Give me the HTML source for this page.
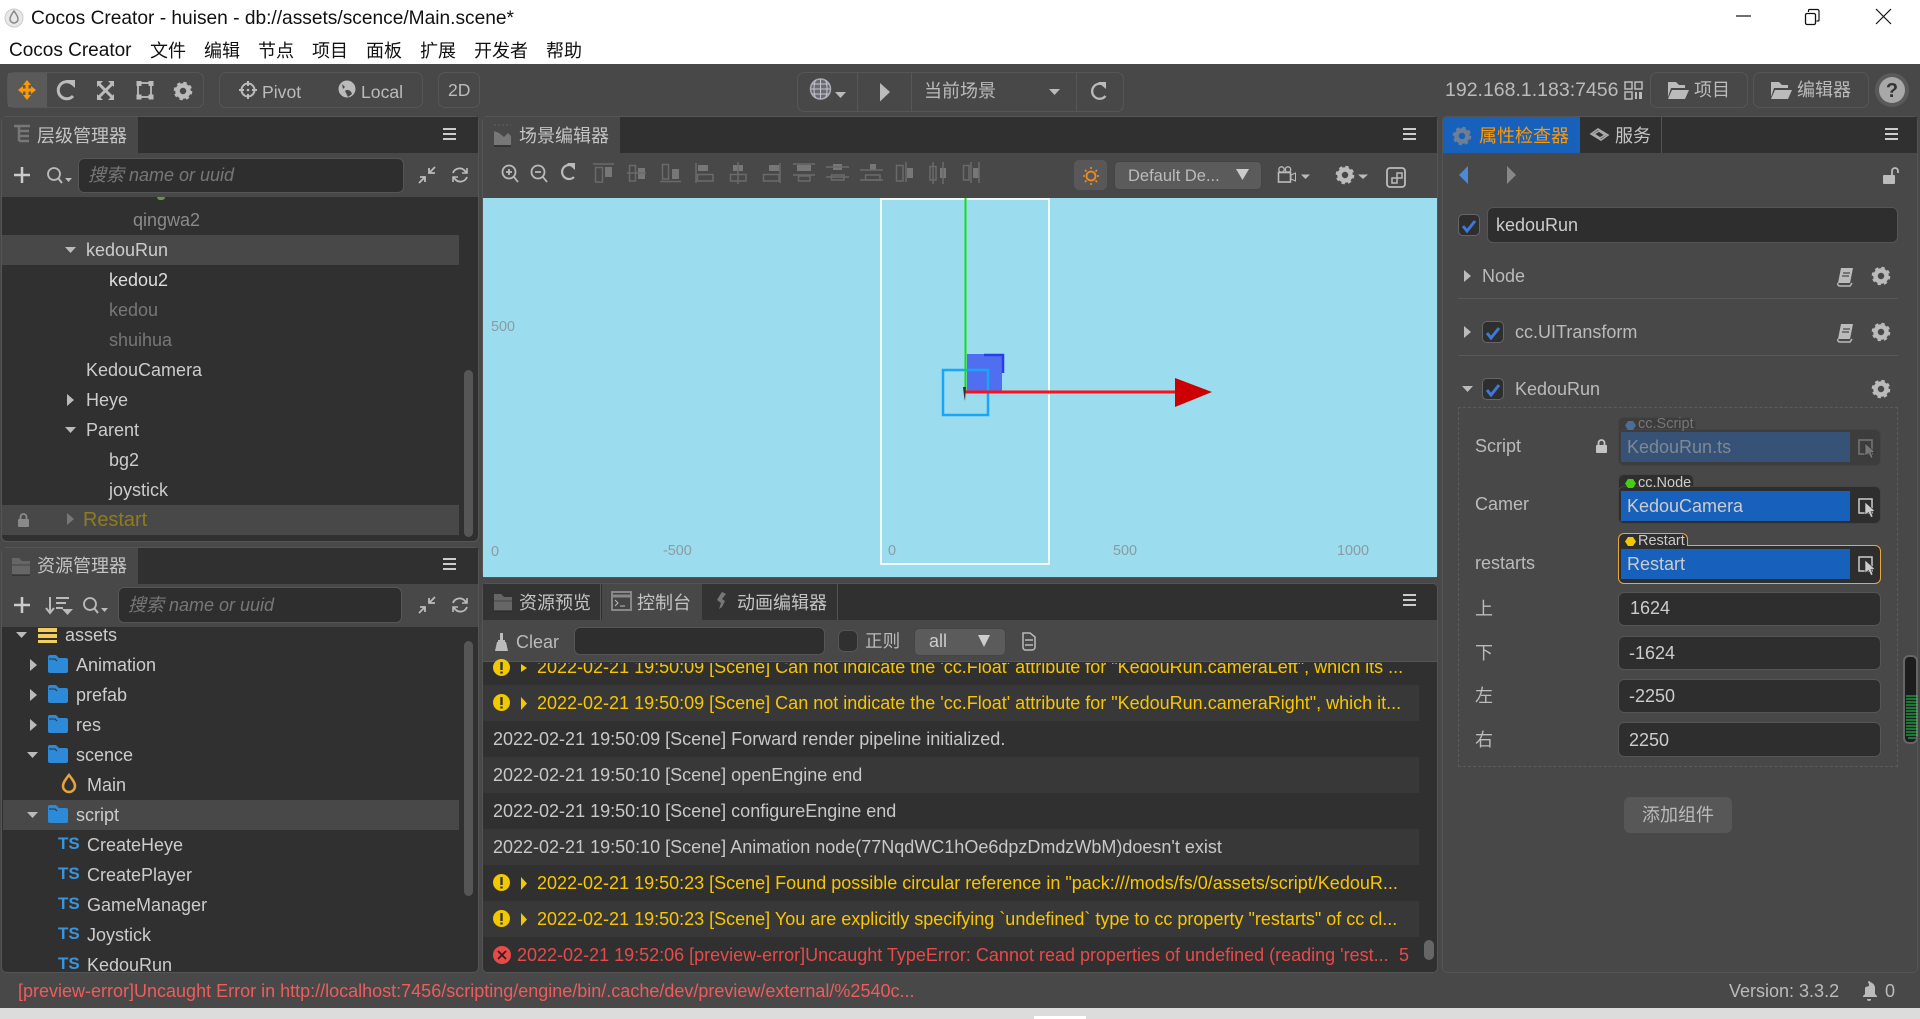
<!DOCTYPE html>
<html><head><meta charset="utf-8"><style>
*{box-sizing:border-box}
html,body{margin:0;padding:0;width:1920px;height:1019px;overflow:hidden;background:#484848}
body{position:relative;font-family:"Liberation Sans","Noto Sans CJK SC",sans-serif;font-size:18px;color:#bbb}
.r{position:absolute}
.t{position:absolute;white-space:nowrap;transform:translateY(-50%);line-height:24px}
.inp{position:absolute;background:#2e2e2e;border:1px solid #555;border-radius:6px}
.ph{font-style:italic;color:#777}
.w{color:#f7c600}
.g{border:1px solid #565656;border-radius:7px;position:absolute}
.b{background:#1760bc;color:#ccc}
svg{position:absolute;left:0;top:0}
</style></head><body>
<div class="r" style="left:0;top:0;width:1920px;height:64px;background:#fff"></div>
<div class="r" style="left:0;top:1008px;width:1920px;height:11px;background:#dcdcdc"></div>
<div class="r" style="left:1034px;top:1016px;width:52px;height:3px;background:#fff"></div>
<div class="t" style="left:31px;top:19px;color:#111;font-size:19.15px">Cocos Creator - huisen - db://assets/scence/Main.scene*</div>
<div class="t" style="left:9px;top:51px;color:#111;font-size:19px">Cocos Creator</div>
<div class="t" style="left:150px;top:51px;color:#111;font-size:18px">文件</div>
<div class="t" style="left:204px;top:51px;color:#111;font-size:18px">编辑</div>
<div class="t" style="left:258px;top:51px;color:#111;font-size:18px">节点</div>
<div class="t" style="left:312px;top:51px;color:#111;font-size:18px">项目</div>
<div class="t" style="left:366px;top:51px;color:#111;font-size:18px">面板</div>
<div class="t" style="left:420px;top:51px;color:#111;font-size:18px">扩展</div>
<div class="t" style="left:474px;top:51px;color:#111;font-size:18px">开发者</div>
<div class="t" style="left:546px;top:51px;color:#111;font-size:18px">帮助</div>

<div class="g" style="left:7px;top:72px;width:197px;height:36px"></div>
<div class="r" style="left:8px;top:73px;width:39px;height:34px;background:#5a5a5a"></div>
<div class="g" style="left:219px;top:72px;width:204px;height:36px"></div>
<div class="g" style="left:438px;top:72px;width:42px;height:36px"></div>
<div class="t" style="left:262px;top:92px;color:#bbb;font-size:17.6px">Pivot</div>
<div class="t" style="left:361px;top:92px;color:#bbb;font-size:17.6px">Local</div>
<div class="t" style="left:448px;top:90px;color:#bbb;font-size:17.6px">2D</div>
<div class="g" style="left:797px;top:72px;width:327px;height:40px"></div>
<div class="r" style="left:857px;top:73px;width:1px;height:38px;background:#565656"></div>
<div class="r" style="left:911px;top:73px;width:1px;height:38px;background:#565656"></div>
<div class="r" style="left:1076px;top:73px;width:1px;height:38px;background:#565656"></div>
<div class="t" style="left:924px;top:91px;color:#bbb;font-size:18px">当前场景</div>
<div class="t" style="left:1445px;top:90px;color:#bbb;font-size:19.5px">192.168.1.183:7456</div>
<div class="g" style="left:1650px;top:72px;width:98px;height:36px"></div>
<div class="g" style="left:1753px;top:72px;width:116px;height:36px"></div>
<div class="t" style="left:1694px;top:90px;font-size:18px">项目</div>
<div class="t" style="left:1797px;top:90px;font-size:18px">编辑器</div>

<!-- hierarchy -->
<div class="r" style="left:1px;top:116px;width:478px;height:426px;background:#484848;border:1px solid #555;border-radius:5px"></div>
<div class="r" style="left:2px;top:117px;width:476px;height:36px;background:#303030"></div>
<div class="r" style="left:2px;top:117px;width:136px;height:36px;background:#484848"></div>
<div class="t" style="left:37px;top:136px;font-size:18px;color:#c4c4c4">层级管理器</div>
<div class="inp" style="left:78px;top:158px;width:326px;height:35px"></div>
<div class="t ph" style="left:88px;top:175px">搜索 name or uuid</div>
<div class="r" style="left:2px;top:197px;width:476px;height:344px;background:#303030;border-radius:0 0 5px 5px;overflow:hidden"></div>
<div class="r" style="left:2px;top:235px;width:457px;height:30px;background:#484848"></div>
<div class="r" style="left:2px;top:505px;width:457px;height:30px;background:#484848"></div>
<div class="r" style="left:157px;top:197px;width:8px;height:3px;background:#5c9a46;border-radius:0 0 4px 4px"></div>
<div class="r" style="left:464px;top:370px;width:9px;height:167px;background:#565656;border-radius:5px"></div>
<div class="t" style="left:133px;top:220px;color:#8a8a8a">qingwa2</div>
<div class="t" style="left:86px;top:250px;color:#ccc">kedouRun</div>
<div class="t" style="left:109px;top:280px;color:#ddd">kedou2</div>
<div class="t" style="left:109px;top:310px;color:#777">kedou</div>
<div class="t" style="left:109px;top:340px;color:#777">shuihua</div>
<div class="t" style="left:86px;top:370px;color:#ccc">KedouCamera</div>
<div class="t" style="left:86px;top:400px;color:#ccc">Heye</div>
<div class="t" style="left:86px;top:430px;color:#ccc">Parent</div>
<div class="t" style="left:109px;top:460px;color:#ccc">bg2</div>
<div class="t" style="left:109px;top:490px;color:#ccc">joystick</div>
<div class="t" style="left:83px;top:520px;color:#8f7c1f;font-size:19.9px">Restart</div>

<!-- assets -->
<div class="r" style="left:1px;top:547px;width:478px;height:426px;background:#484848;border:1px solid #555;border-radius:5px"></div>
<div class="r" style="left:2px;top:548px;width:476px;height:36px;background:#303030"></div>
<div class="r" style="left:2px;top:548px;width:136px;height:37px;background:#484848"></div>
<div class="t" style="left:37px;top:566px;font-size:18px;color:#c4c4c4">资源管理器</div>
<div class="inp" style="left:118px;top:587px;width:284px;height:36px"></div>
<div class="t ph" style="left:128px;top:605px">搜索 name or uuid</div>
<div class="r" style="left:2px;top:627px;width:476px;height:345px;background:#303030;overflow:hidden;border-radius:0 0 5px 5px"></div>
<div class="r" style="left:3px;top:800px;width:456px;height:30px;background:#484848"></div>
<div class="r" style="left:464px;top:641px;width:9px;height:255px;background:#565656;border-radius:5px"></div>
<div class="t" style="left:65px;top:635px;color:#ccc">assets</div>
<div class="t" style="left:76px;top:665px;color:#ccc">Animation</div>
<div class="t" style="left:76px;top:695px;color:#ccc">prefab</div>
<div class="t" style="left:76px;top:725px;color:#ccc">res</div>
<div class="t" style="left:76px;top:755px;color:#ccc">scence</div>
<div class="t" style="left:87px;top:785px;color:#ccc">Main</div>
<div class="t" style="left:76px;top:815px;color:#ccc">script</div>
<div class="t" style="left:87px;top:845px;color:#ccc">CreateHeye</div>
<div class="t" style="left:87px;top:875px;color:#ccc">CreatePlayer</div>
<div class="t" style="left:87px;top:905px;color:#ccc">GameManager</div>
<div class="t" style="left:87px;top:935px;color:#ccc">Joystick</div>
<div class="t" style="left:87px;top:965px;color:#ccc;height:14px;overflow:hidden;line-height:14px">KedouRun</div>
<div class="t" style="left:58px;top:844px;color:#3a96dc;font-weight:bold;font-size:17px">TS</div>
<div class="t" style="left:58px;top:874px;color:#3a96dc;font-weight:bold;font-size:17px">TS</div>
<div class="t" style="left:58px;top:904px;color:#3a96dc;font-weight:bold;font-size:17px">TS</div>
<div class="t" style="left:58px;top:934px;color:#3a96dc;font-weight:bold;font-size:17px">TS</div>
<div class="t" style="left:58px;top:964px;color:#3a96dc;font-weight:bold;font-size:17px">TS</div>

<!-- scene -->
<div class="r" style="left:482px;top:116px;width:956px;height:462px;border:1px solid #555;border-radius:5px"></div>
<div class="r" style="left:483px;top:117px;width:954px;height:36px;background:#303030"></div>
<div class="r" style="left:483px;top:117px;width:137px;height:36px;background:#484848"></div>
<div class="t" style="left:519px;top:136px;font-size:18px;color:#c4c4c4">场景编辑器</div>
<div class="r" style="left:1074px;top:160px;width:33px;height:30px;background:#585858;border-radius:5px"></div>
<div class="r" style="left:1114px;top:161px;width:148px;height:29px;background:#5b5b5b;border:1px solid #444;border-radius:5px"></div>
<div class="t" style="left:1128px;top:176px;color:#bbb;font-size:16.5px">Default De...</div>
<div class="r" style="left:483px;top:198px;width:954px;height:379px;background:#9bdcee;overflow:hidden"></div>
<div class="r" style="left:880px;top:198px;width:170px;height:367px;border:2px solid #eef9fc"></div>
<div class="t" style="left:491px;top:327px;color:#8c9ba1;font-size:14.4px">500</div>
<div class="t" style="left:491px;top:552px;color:#8c9ba1;font-size:14.4px">0</div>
<div class="t" style="left:663px;top:551px;color:#8c9ba1;font-size:14.4px">-500</div>
<div class="t" style="left:888px;top:551px;color:#8c9ba1;font-size:14.4px">0</div>
<div class="t" style="left:1113px;top:551px;color:#8c9ba1;font-size:14.4px">500</div>
<div class="t" style="left:1337px;top:551px;color:#8c9ba1;font-size:14.4px">1000</div>

<!-- console -->
<div class="r" style="left:482px;top:583px;width:956px;height:390px;background:#303030;border:1px solid #555;border-radius:5px"></div>
<div class="r" style="left:483px;top:620px;width:954px;height:42px;background:#484848;border-bottom:1px solid #555"></div>
<div class="r" style="left:483px;top:584px;width:118px;height:36px;background:#333;border-right:1px solid #555"></div>
<div class="r" style="left:602px;top:584px;width:100px;height:37px;background:#484848"></div>
<div class="r" style="left:702px;top:584px;width:136px;height:36px;background:#333;border-right:1px solid #555"></div>
<div class="t" style="left:519px;top:603px;font-size:18px;color:#c4c4c4">资源预览</div>
<div class="t" style="left:637px;top:603px;font-size:18px;color:#c4c4c4">控制台</div>
<div class="t" style="left:737px;top:603px;font-size:18px;color:#c4c4c4">动画编辑器</div>
<div class="t" style="left:516px;top:642px;color:#bbb">Clear</div>
<div class="inp" style="left:574px;top:627px;width:251px;height:28px"></div>
<div class="r" style="left:838px;top:630px;width:20px;height:22px;background:#303030;border:1px solid #555;border-radius:6px"></div>
<div class="t" style="left:865px;top:641px;font-size:17.6px;color:#bbb">正则</div>
<div class="r" style="left:914px;top:628px;width:92px;height:28px;background:#5b5b5b;border:1px solid #444;border-radius:5px"></div>
<div class="t" style="left:929px;top:641px;color:#ccc">all</div>
<div class="r" style="left:483px;top:663px;width:936px;height:22px;background:#303030;overflow:hidden"></div>
<div class="r" style="left:483px;top:685px;width:936px;height:36px;background:#383838"></div>
<div class="r" style="left:483px;top:757px;width:936px;height:36px;background:#383838"></div>
<div class="r" style="left:483px;top:829px;width:936px;height:36px;background:#383838"></div>
<div class="r" style="left:483px;top:901px;width:936px;height:36px;background:#383838"></div>
<div class="r" style="left:1424px;top:940px;width:10px;height:20px;background:#666;border-radius:5px"></div>
<div class="r" style="left:483px;top:663px;width:936px;height:18px;overflow:hidden"><div class="t w" style="left:54px;top:4px;">2022-02-21 19:50:09 [Scene] Can not indicate the 'cc.Float' attribute for "KedouRun.cameraLeft", which its ...</div></div>
<div class="t w" style="left:537px;top:703px">2022-02-21 19:50:09 [Scene] Can not indicate the 'cc.Float' attribute for "KedouRun.cameraRight", which it...</div>
<div class="t" style="left:493px;top:739px;color:#c8c8c8">2022-02-21 19:50:09 [Scene] Forward render pipeline initialized.</div>
<div class="t" style="left:493px;top:775px;color:#c8c8c8">2022-02-21 19:50:10 [Scene] openEngine end</div>
<div class="t" style="left:493px;top:811px;color:#c8c8c8">2022-02-21 19:50:10 [Scene] configureEngine end</div>
<div class="t" style="left:493px;top:847px;color:#c8c8c8">2022-02-21 19:50:10 [Scene] Animation node(77NqdWC1hOe6dpzDmdzWbM)doesn't exist</div>
<div class="t w" style="left:537px;top:883px">2022-02-21 19:50:23 [Scene] Found possible circular reference in "pack:///mods/fs/0/assets/script/KedouR...</div>
<div class="t w" style="left:537px;top:919px">2022-02-21 19:50:23 [Scene] You are explicitly specifying `undefined` type to cc property "restarts" of cc cl...</div>
<div class="t" style="left:517px;top:955px;color:#e84a4a">2022-02-21 19:52:06 [preview-error]Uncaught TypeError: Cannot read properties of undefined (reading 'rest...</div>
<div class="t" style="left:1399px;top:955px;color:#e84a4a">5</div>

<!-- inspector -->
<div class="r" style="left:1442px;top:116px;width:476px;height:857px;border:1px solid #555;border-radius:5px"></div>
<div class="r" style="left:1443px;top:117px;width:474px;height:36px;background:#303030"></div>
<div class="r" style="left:1443px;top:117px;width:137px;height:36px;background:#1760bc"></div>
<div class="r" style="left:1661px;top:117px;width:1px;height:36px;background:#555"></div>
<div class="t" style="left:1479px;top:136px;font-size:18px;color:#f90">属性检查器</div>
<div class="t" style="left:1615px;top:136px;font-size:18px;color:#c4c4c4">服务</div>
<div class="r" style="left:1458px;top:214px;width:22px;height:22px;background:#2e2e2e;border:1px solid #666;border-radius:5px"></div>
<div class="inp" style="left:1487px;top:207px;width:411px;height:36px"></div>
<div class="t" style="left:1496px;top:225px;color:#ccc">kedouRun</div>
<div class="t" style="left:1482px;top:276px;color:#bbb">Node</div>
<div class="r" style="left:1458px;top:298px;width:440px;height:1px;background:#585858"></div>
<div class="r" style="left:1482px;top:321px;width:22px;height:22px;background:#2e2e2e;border:1px solid #666;border-radius:5px"></div>
<div class="t" style="left:1515px;top:332px;color:#bbb">cc.UITransform</div>
<div class="r" style="left:1458px;top:355px;width:440px;height:1px;background:#585858"></div>
<div class="r" style="left:1482px;top:378px;width:22px;height:22px;background:#2e2e2e;border:1px solid #666;border-radius:5px"></div>
<div class="t" style="left:1515px;top:389px;color:#bbb">KedouRun</div>
<div class="r" style="left:1458px;top:407px;width:440px;height:360px;border:1px dashed #5c5c5c"></div>
<div class="t" style="left:1475px;top:446px;color:#bbb">Script</div>
<div class="t" style="left:1475px;top:504px;color:#bbb">Camer</div>
<div class="t" style="left:1475px;top:563px;color:#bbb">restarts</div>
<div class="t" style="left:1475px;top:609px;color:#bbb">上</div>
<div class="t" style="left:1475px;top:653px;color:#bbb">下</div>
<div class="t" style="left:1475px;top:696px;color:#bbb">左</div>
<div class="t" style="left:1475px;top:740px;color:#bbb">右</div>

<div class="r" style="left:1618px;top:417px;width:78px;height:16px;background:#3d3d3d;border:1px solid #444;border-bottom:0;border-radius:6px 6px 0 0"></div>
<div class="r" style="left:1618px;top:429px;width:263px;height:37px;background:#3d3d3d;border:1px solid #444;border-radius:6px"></div>
<div class="r" style="left:1621px;top:432px;width:229px;height:30px;background:#365277"></div>
<div class="t" style="left:1638px;top:424px;color:#777;font-size:14.5px">cc.Script</div>
<div class="t" style="left:1627px;top:447px;color:#7f8894">KedouRun.ts</div>

<div class="r" style="left:1618px;top:474px;width:76px;height:16px;background:#2e2e2e;border:1px solid #444;border-bottom:0;border-radius:6px 6px 0 0"></div>
<div class="r" style="left:1618px;top:486px;width:263px;height:38px;background:#2e2e2e;border:1px solid #444;border-radius:6px"></div>
<div class="r b" style="left:1621px;top:491px;width:229px;height:30px"></div>
<div class="t" style="left:1638px;top:483px;color:#ccc;font-size:14.5px">cc.Node</div>
<div class="t" style="left:1627px;top:506px;color:#ccc">KedouCamera</div>

<div class="r" style="left:1618px;top:533px;width:70px;height:16px;background:#2e2e2e;border:1px solid #e8a93c;border-bottom:0;border-radius:6px 6px 0 0"></div>
<div class="r" style="left:1618px;top:545px;width:263px;height:39px;background:#2e2e2e;border:1px solid #e8a93c;border-radius:0 6px 6px 6px"></div>
<div class="r" style="left:1619px;top:544px;width:68px;height:3px;background:#2e2e2e"></div>
<div class="r b" style="left:1621px;top:549px;width:229px;height:30px"></div>
<div class="t" style="left:1638px;top:541px;color:#ccc;font-size:14.5px">Restart</div>
<div class="t" style="left:1627px;top:564px;color:#ccc">Restart</div>

<div class="inp" style="left:1618px;top:592px;width:263px;height:34px"></div>
<div class="inp" style="left:1618px;top:636px;width:263px;height:34px"></div>
<div class="inp" style="left:1618px;top:679px;width:263px;height:34px"></div>
<div class="inp" style="left:1618px;top:722px;width:263px;height:35px"></div>
<div class="t" style="left:1630px;top:608px;color:#ccc">1624</div>
<div class="t" style="left:1629px;top:653px;color:#ccc">-1624</div>
<div class="t" style="left:1629px;top:696px;color:#ccc">-2250</div>
<div class="t" style="left:1629px;top:740px;color:#ccc">2250</div>
<div class="r" style="left:1624px;top:797px;width:108px;height:36px;background:#575757;border-radius:6px"></div>
<div class="t" style="left:1642px;top:815px;font-size:18px;color:#bbb">添加组件</div>
<div class="r" style="left:1903px;top:655px;width:15px;height:89px;background:#1d1d1d;border:2px solid #666;border-radius:6px"></div>

<!-- status -->
<div class="t" style="left:18px;top:991px;color:#ee5c5c">[preview-error]Uncaught Error in http://localhost:7456/scripting/engine/bin/.cache/dev/preview/external/%2540c...</div>
<div class="t" style="left:1729px;top:991px;color:#bbb">Version: 3.3.2</div>
<div class="t" style="left:1885px;top:991px;color:#bbb">0</div>

<svg width="1920" height="1019" viewBox="0 0 1920 1019" fill="none">
<defs>
<g id="gear"><circle r="5.5" stroke="currentColor" stroke-width="4.5"/><circle r="8" stroke="currentColor" stroke-width="2.6" stroke-dasharray="3.3 3"/></g>
<g id="menu"><path d="M0 1h13M0 6h13M0 11h13" stroke="#ccc" stroke-width="2"/></g>
<g id="folder"><path d="M0 3a2 2 0 012-2h6l3 3h7a2 2 0 012 2v11a2 2 0 01-2 2H2a2 2 0 01-2-2z" transform="translate(0 -1)" fill="#2d8ad8"/><path d="M1 5h6l2 2" stroke="#303030" stroke-width="1" transform="translate(0 -1)"/></g>
<g id="gfolder"><path d="M0 2h7l3 3h8v14H0z" fill="#666"/><path d="M0 8h18v2H0z" fill="#555"/><path d="M0 19h18" stroke="#222"/></g>
<g id="mag"><circle cx="7" cy="7" r="6" stroke="#bbb" stroke-width="1.8"/><path d="M11 11l4 5" stroke="#bbb" stroke-width="2"/><path d="M18 11h7l-3.500 4z" fill="#bbb"/></g>
<g id="coll"><path d="M17 1l-6 6M11 2v5h6M1 17l6-6M7 16v-5H2" stroke="#bbb" stroke-width="1.800"/></g>
<g id="ref"><path d="M2 7a7 7 0 0112-2l2 2M16 11a7 7 0 01-12 2l-2-2" stroke="#bbb" stroke-width="1.800"/><path d="M16 2v5h-5M2 16v-5h5" stroke="#bbb" stroke-width="1.600"/></g>
<g id="ca"><path d="M0 0h11l-5.500 6z" fill="#bbb"/></g>
<g id="cr"><path d="M0 0l7 6-7 6z" fill="#bbb"/></g>
<g id="ck"><path d="M4 11l4 5 8-10" stroke="#3f78d8" stroke-width="3"/></g>
<g id="warn"><circle cx="8.500" cy="8.500" r="8.500" fill="#f2c800"/><path d="M8.500 3v8M8.500 12.500v2" stroke="#333" stroke-width="2.400"/></g>
<g id="wa"><path d="M0 0l6 6.500L0 13z" fill="#f2c800"/></g>
<g id="book"><path d="M4 0h12l-3 15H1z" fill="#bbb"/><path d="M1 15a2 2 0 002 3h10l2-3" stroke="#bbb" stroke-width="1.500"/><path d="M6 5h7M5 8h7" stroke="#484848" stroke-width="1.200"/></g>
<g id="pick"><rect x="0" y="0" width="13" height="14" stroke="currentColor" stroke-width="1.500"/><path d="M6 3l10 9-4 .5 2 5-2 1-2.500-5L6 16z" fill="currentColor" stroke="#2e2e2e" stroke-width=".6"/></g>
<g id="lock"><rect x="0" y="6" width="11" height="8" rx="1" fill="currentColor"/><path d="M2.500 7V4a3 3 0 016 0v3" stroke="currentColor" stroke-width="1.800"/></g>
<g id="broom"><path d="M5 0h3v7H5zM3 7h7v2H3zM2 9h9l2 9H0z" fill="#bbb"/></g>
<g id="hex"><path d="M3 0h5l3 4.500L8 9H3L0 4.500z"/></g>
</defs>
<!-- window -->
<circle cx="14" cy="18" r="9" fill="#e8e8e8" stroke="#ccc"/><path d="M14 11c-3 4-4 6-4 8a4 4 0 008 0c0-2-1-4-4-8z" stroke="#8a8a8a" stroke-width="1.500"/>
<path d="M1736 16h15" stroke="#111" stroke-width="1.200"/>
<rect x="1805.500" y="13.500" width="10" height="11" rx="1.500" stroke="#111" stroke-width="1.300"/><path d="M1808.500 12v-1.500a1 1 0 011-1h8a1.500 1.500 0 011.500 1.500v9a1 1 0 01-1 1h-1.500" stroke="#111" stroke-width="1.200"/>
<path d="M1876 9l15 15M1891 9l-15 15" stroke="#111" stroke-width="1.200"/>
<!-- toolbar 1 -->
<g stroke="#f90" stroke-width="3" fill="#f90"><path d="M20 90h14M27 83v14"/><path d="M27 80l4 5h-8zM27 100l4-5h-8zM18 90l5-4v8zM36 90l-5-4v8z" stroke-width="0"/></g>
<path d="M72.500 84a8.500 8.500 0 10.500 12" stroke="#bbb" stroke-width="3"/><path d="M66 80h9v8z" fill="#bbb"/>
<path d="M99 84l13 13M112 84L99 97" stroke="#bbb" stroke-width="3"/><path d="M97 81h6l-6 6zM114 81h-6l6 6zM97 100h6l-6-6zM114 100h-6l6-6z" fill="#bbb"/>
<rect x="138" y="83" width="13" height="14" stroke="#bbb" stroke-width="1.800"/><g fill="#bbb"><rect x="136.500" y="81" width="5" height="5"/><rect x="148.500" y="81" width="5" height="5"/><rect x="136.500" y="94.500" width="5" height="5"/><rect x="148.500" y="94.500" width="5" height="5"/></g>
<use href="#gear" x="183" y="91" color="#bbb"/>
<circle cx="248" cy="90" r="6.500" stroke="#bbb" stroke-width="2"/><path d="M248 81v5M248 94v5M239 90h5M252 90h5" stroke="#bbb" stroke-width="2"/><circle cx="248" cy="90" r="1.300" fill="#bbb"/>
<circle cx="347" cy="89" r="8.500" fill="#bbb"/><path d="M345 91c2-2 6-1 7 3l-4 3zM342 84l3 3-2 2z" fill="#484848"/>
<!-- center -->
<circle cx="820.500" cy="89" r="10" stroke="#aab" fill="#6a6a70" stroke-width="1.500"/><path d="M811 89h19M812 84h17M812 94h17M820.500 79v20M815.500 80c-2 5-2 13 0 18M825.500 80c2 5 2 13 0 18" stroke="#c4c4cc" stroke-width="1"/>
<use href="#ca" x="835" y="92"/>
<path d="M880 83l10 9-10 9.500z" fill="#bbb"/>
<use href="#ca" x="1049" y="89"/>
<path d="M1105 86a7.500 7.500 0 10.500 10" stroke="#bbb" stroke-width="2.300"/><path d="M1098 82h8v7z" fill="#bbb"/>
<!-- top right -->
<g fill="#bbb"><path d="M1625 82h7v7h-7zM1635 82h7v7h-7zM1625 92h7v7h-7z" stroke="#bbb" fill="none" stroke-width="1.500"/><path d="M1635 92h2v7h-2zM1639 92h3v7h-3z"/></g>
<path d="M1668 82h8l3 3h6v3h-14l-3 9zM1672 90h17l-4 9h-17z" fill="#bbb"/>
<path d="M1771 82h8l3 3h6v3h-14l-3 9zM1775 90h17l-4 9h-17z" fill="#bbb"/>
<circle cx="1892" cy="90" r="17" fill="#5a5a5a"/><circle cx="1892" cy="90" r="13" fill="#a8a8a8"/><text x="1892" y="97" text-anchor="middle" font-size="20" font-weight="bold" fill="#333" font-family="Liberation Sans">?</text>
<!-- tab icons -->
<path d="M14 126h16M19 126v15M19 131h10M19 136h10M19 141h10" stroke="#777" stroke-width="2.500"/>
<use href="#menu" x="443" y="128"/><use href="#menu" x="1403" y="128"/><use href="#menu" x="1885" y="128"/><use href="#menu" x="443" y="558"/><use href="#menu" x="1403" y="594"/>
<use href="#gfolder" x="12" y="556"/>
<path d="M494 145v-14l5 2 5 4 4-4 3 3v9z" fill="#777"/><path d="M494 146h17" stroke="#222"/>
<path d="M494 125h17" stroke="#555" stroke-width="2" stroke-dasharray="2 2"/>
<use href="#gfolder" x="494" y="592"/>
<rect x="612" y="592" width="19" height="18" stroke="#888" stroke-width="2" fill="#444"/><path d="M612 596h19" stroke="#888" stroke-width="3"/><path d="M615 600l3 3-3 3M620 606h5" stroke="#bbb"/>
<path d="M722 592l4 2-4 5 3 2-3 6-3 2 2-6-4-3 3-5z" fill="#777"/>
<!-- service & gear tab -->
<use href="#gear" x="1462" y="136" color="#6d7f94"/>
<path d="M1591 134l7-5 10 6-7 5zM1594 134l6 4 5-3-6-4z" stroke="#aaa" stroke-width="1.600"/>
<!-- search rows -->
<path d="M22 167v16M14 175h16" stroke="#ccc" stroke-width="2.500"/>
<use href="#mag" x="47" y="167"/>
<use href="#coll" x="418" y="166"/><use href="#ref" x="451" y="166"/>
<path d="M22 597v16M14 605h16" stroke="#ccc" stroke-width="2.500"/>
<path d="M50 597v15M46 608l4 5 4-5M56 598h13M56 603h10M56 608h7" stroke="#bbb" stroke-width="2"/><use href="#ca" x="62" y="609"/>
<use href="#mag" x="83" y="597"/>
<use href="#coll" x="418" y="596"/><use href="#ref" x="451" y="596"/>
<!-- tree arrows -->
<use href="#ca" x="65" y="247"/><use href="#cr" x="67" y="394"/><use href="#ca" x="65" y="427"/>
<g color="#8a8a8a"><use href="#lock" x="18" y="513"/></g><path d="M67 513l7 6-7 6z" fill="#777"/>
<use href="#ca" x="16" y="632"/><use href="#cr" x="30" y="659"/><use href="#cr" x="30" y="689"/><use href="#cr" x="30" y="719"/><use href="#ca" x="27" y="752"/><use href="#ca" x="27" y="812"/>
<path d="M38 628h19v4H38zM38 634h19v4H38zM38 640h19v3H38z" fill="#f2cc5c"/><path d="M45 632h12v2H45zM38 638h12v2H38z" fill="#303030"/>
<use href="#folder" x="48" y="655"/><use href="#folder" x="48" y="685"/><use href="#folder" x="48" y="715"/><use href="#folder" x="48" y="745"/><use href="#folder" x="48" y="805"/>
<path d="M69 775c-4 5-6 8-6 11a6 6 0 0012 0c0-3-2-6-6-11z" stroke="#e8a33c" stroke-width="2.500"/>
<!-- scene toolbar -->
<g stroke="#bbb" stroke-width="1.800"><circle cx="509" cy="172" r="6.500"/><path d="M514 177l4 5M506 172h6M509 169v6"/><circle cx="538" cy="172" r="6.500"/><path d="M543 177l4 5M535 172h6"/></g>
<path d="M574 167a7 7 0 100 10" stroke="#bbb" stroke-width="2.200"/><path d="M567 163h8v7z" fill="#bbb"/>
<!-- align icons -->
<g fill="#777">
<rect x="605" y="167" width="7" height="10"/><rect x="638" y="168" width="7" height="11"/><rect x="672" y="169" width="7" height="10"/>
<rect x="698" y="165" width="10" height="6"/><rect x="733" y="165" width="10" height="6"/><rect x="769" y="165" width="10" height="6"/>
<rect x="797" y="165" width="14" height="6"/><rect x="833" y="164" width="9" height="6"/><rect x="870" y="164" width="6" height="6"/>
<rect x="907" y="168" width="6" height="10"/><rect x="940" y="168" width="6" height="10"/><rect x="973" y="168" width="6" height="10"/>
</g>
<g stroke="#6a6a6a" stroke-width="1.500">
<path d="M593 164h21M627 173h19M660 181.500h21M696 163v20M738 162v22M780 163v20M793 164h22M793 175h22M826 167h23M826 177h23M860 170h23M860 180h23M906 162v20M933 162v22M943 162v22M971 162v21M979 162v21"/>
<rect x="595.500" y="167.500" width="7" height="14.500"/><rect x="629.500" y="165.500" width="6" height="15.500"/><rect x="662.500" y="164.500" width="6" height="14.500"/>
<rect x="697.500" y="174.500" width="15.500" height="6.500"/><rect x="730.500" y="174.500" width="15.500" height="6.500"/><rect x="763.500" y="174.500" width="15.500" height="6.500"/>
<rect x="798.500" y="176" width="11.500" height="5"/><rect x="831.500" y="175" width="12.500" height="5"/><rect x="865.500" y="175" width="14.500" height="5"/>
<rect x="896.500" y="165.500" width="6.500" height="15.500"/><rect x="930" y="166.500" width="6" height="13.500"/><rect x="963.500" y="165.500" width="5.500" height="14.500"/>
</g>
<circle cx="1091" cy="176" r="4.500" stroke="#f08a24" stroke-width="1.800"/><path d="M1091 167v2M1083 176h2M1097 176h2M1085 170l1.500 1.500M1097 170l-1.500 1.500M1085 182l1.500-1.500M1097 182l-1.500-1.500M1091 183v2" stroke="#f08a24" stroke-width="1.600"/>
<path d="M1236 169h13l-6.500 11z" fill="#ccc"/>
<rect x="1278.500" y="172.500" width="12" height="9.500" fill="#484848" stroke="#bbb" stroke-width="1.600"/><circle cx="1281.500" cy="169.500" r="2.700" stroke="#bbb" stroke-width="1.300"/><circle cx="1288" cy="169.500" r="2.700" stroke="#bbb" stroke-width="1.300"/><path d="M1291 175l4.500-2v8l-4.500-2z" stroke="#bbb"/>
<path d="M1301 174.500h9l-4.500 4.500z" fill="#bbb"/>
<use href="#gear" x="1345" y="175" color="#bbb"/><path d="M1358 174.500h10l-5 4.500z" fill="#bbb"/>
<rect x="1387" y="168" width="18" height="19" rx="3" stroke="#bbb" stroke-width="1.800"/><path d="M1392 178h5v5h-5zM1397 173h5v5h-5z" stroke="#bbb" stroke-width="1.500"/>
<!-- scene gizmo -->
<rect x="967" y="354" width="35" height="38" fill="#4f6ff0"/>
<path d="M984 355h19v18" stroke="#2a3cee" stroke-width="2.500"/>
<rect x="943" y="370" width="45" height="45" stroke="#1ba5f8" stroke-width="2.500"/>
<path d="M965.500 198v194" stroke="#10e010" stroke-width="2"/>
<path d="M965 392h212" stroke="#ff1018" stroke-width="3"/>
<path d="M1175 378l37 14-37 15z" fill="#cc0000"/>
<path d="M963 387l1 9 1 5 1-14z" fill="#333"/>
<!-- console -->
<use href="#broom" x="495" y="633"/>
<path d="M1023 633h7l5 4v10a3 3 0 01-3 3h-7a3 3 0 01-2-3z" stroke="#bbb" stroke-width="1.500"/><path d="M1025 640h8M1025 645h8" stroke="#bbb" stroke-width="1.500"/>
<path d="M978 635h12l-6 12z" fill="#ccc"/>
<use href="#warn" x="493" y="659"/><path d="M521 664h0l6 4-6 4z" fill="#f2c800"/>
<use href="#warn" x="493" y="694"/><use href="#wa" x="521" y="697"/>
<use href="#warn" x="493" y="874"/><use href="#wa" x="521" y="877"/>
<use href="#warn" x="493" y="910"/><use href="#wa" x="521" y="913"/>
<circle cx="502" cy="955" r="9" fill="#e84a4a"/><path d="M498 951l8 8M506 951l-8 8" stroke="#3a1a1a" stroke-width="1.800"/>
<!-- inspector -->
<path d="M1468 166v18l-9-9z" fill="#4a8ad8"/><path d="M1507 166v18l9-9z" fill="#888"/>
<g color="#bbb"><rect x="1883" y="175" width="12" height="9" rx="1" fill="currentColor"/><path d="M1892 175v-4a3 3 0 016 0v2" stroke="currentColor" stroke-width="1.800"/></g>
<use href="#ck" x="1459" y="215"/><use href="#ck" x="1483" y="322"/><use href="#ck" x="1483" y="379"/>
<use href="#cr" x="1464" y="270"/><use href="#cr" x="1464" y="326"/><use href="#ca" x="1462" y="386"/>
<use href="#book" x="1837" y="268"/><use href="#gear" x="1881" y="276" color="#bbb"/>
<use href="#book" x="1837" y="324"/><use href="#gear" x="1881" y="332" color="#bbb"/>
<use href="#gear" x="1881" y="389" color="#bbb"/>
<g color="#c4c4c4"><use href="#lock" x="1596" y="439"/></g>
<g color="#777"><use href="#pick" x="1859" y="440"/></g>
<g color="#ccc"><use href="#pick" x="1859" y="499"/><use href="#pick" x="1859" y="557"/></g>
<g fill="#4e6d94"><use href="#hex" x="1625" y="421"/></g>
<g fill="#44d010"><use href="#hex" x="1625" y="479"/></g>
<g fill="#f2c800"><use href="#hex" x="1625" y="537"/></g>
<path d="M1906 696h12M1906 699h12M1906 702h12M1906 705h12M1906 708h12M1906 711h12M1906 714h12M1906 717h12M1906 720h12M1906 723h12M1906 726h12M1906 729h12M1906 732h12M1906 735h12M1908 738h8" stroke="#1ed050" stroke-width="1"/>
<path d="M1870 987a6 6 0 00-1-4l0 0a1 1 0 012 0c3 1 5 3 5 6v6l2 2v1h-14v-1l2-2v-6c0-1 1-1 4-2zM1868 1000h4a2 2 0 01-4 0z" fill="#bbb" transform="translate(-1 -1)"/>
</svg>
</body></html>
